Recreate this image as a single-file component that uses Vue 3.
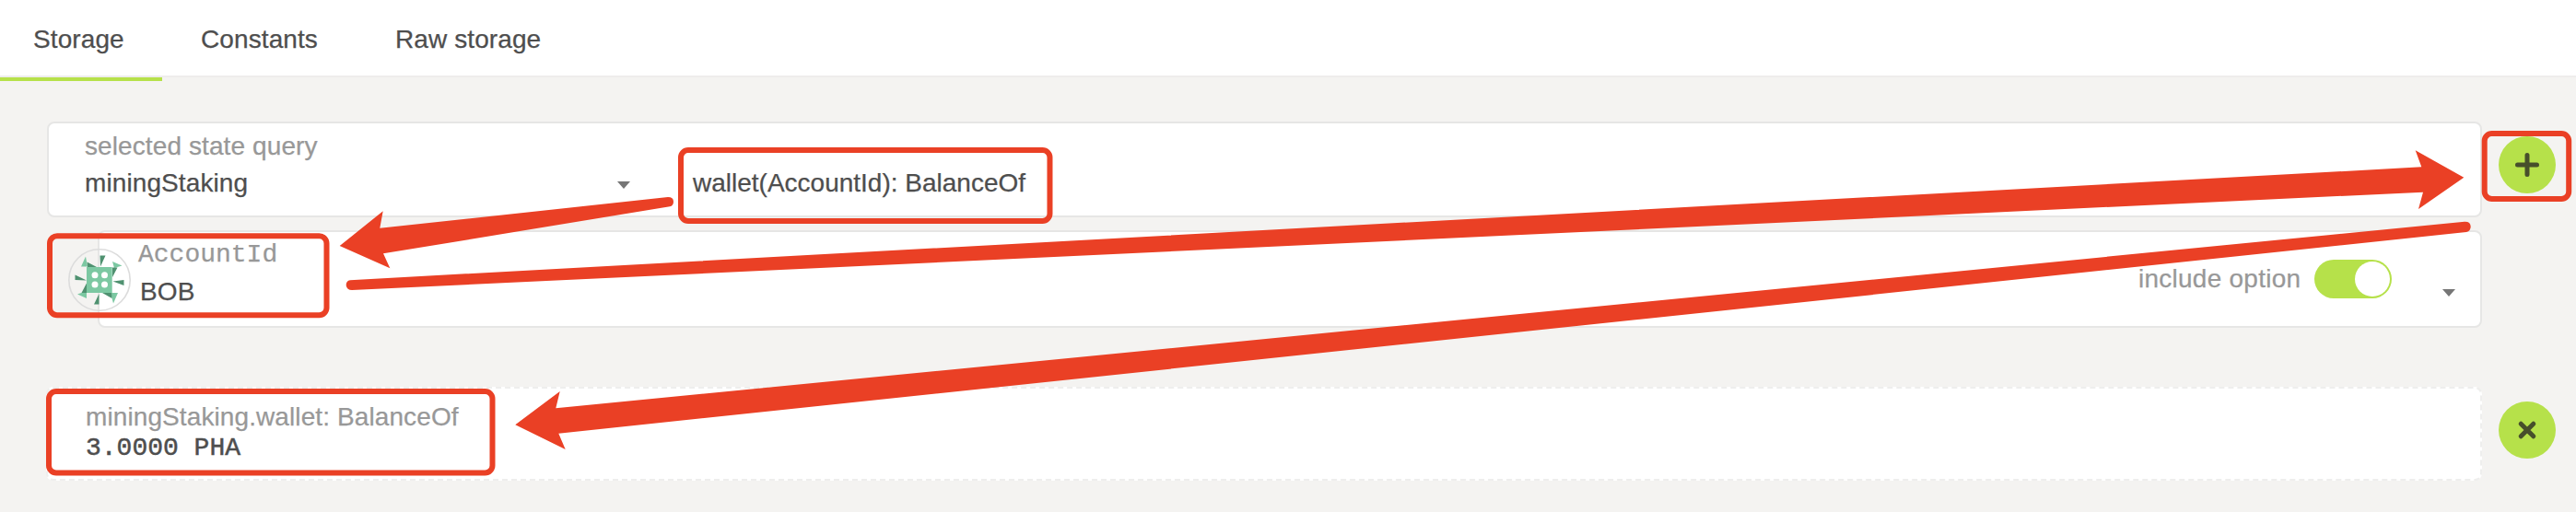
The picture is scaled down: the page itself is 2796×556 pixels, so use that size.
<script setup>
const tabs = [
  { label: 'Storage', active: true },
  { label: 'Constants', active: false },
  { label: 'Raw storage', active: false },
]
</script>

<template>
  <div class="page">
    <nav class="tabs">
      <div v-for="t in tabs" :key="t.label" class="tab" :class="{ active: t.active }">{{ t.label }}</div>
    </nav>

    <main class="content">
      <section class="row">
        <div class="card query">
          <div class="dropdown">
            <div class="label">selected state query</div>
            <div class="value">miningStaking<i class="caret"></i></div>
          </div>
          <div class="method">wallet(AccountId): BalanceOf</div>
        </div>
        <button class="round" aria-label="Add">
          <svg width="26" height="26" viewBox="0 0 26 26"><path d="M13 2.500V23.500M2.500 13H23.500" /></svg>
        </button>
      </section>

      <section class="param">
        <div class="card account">
          <svg class="identicon" width="68" height="68" viewBox="0 0 68 68">
            <circle cx="34" cy="34" r="33.2" fill="none" stroke="#dcdcdc" stroke-width="1.6" />
            <g fill="#7cc8a2">
              <path d="M20 20H47.700V48H20Z" />
              <path d="M19 8.500L14 19.500H21L20 14ZM48 14L58.500 18.500L50 21ZM20 54L10 49.500L20 46ZM49 59.500L54 48H46Z" />
            </g>
            <g fill="#4f9170">
              <path d="M34.500 7.500H40.500L35 19.500ZM60.500 34V40L48.500 35.500ZM33.500 60.500H28L33.500 49ZM7.500 34V28.500L20 34.500Z" />
              <path d="M20.500 14.500L31 20H21ZM53.500 20.500L48 31V20.500ZM47.500 54L37 48H47ZM14.500 48L20 37.500V48Z" />
            </g>
            <g fill="#fff">
              <circle cx="29" cy="28.700" r="3.500" /><circle cx="39.500" cy="28.700" r="3.500" />
              <circle cx="29" cy="39" r="3.500" /><circle cx="39.500" cy="39" r="3.500" />
            </g>
          </svg>
          <div class="who">
            <div class="type">AccountId</div>
            <div class="name">BOB</div>
          </div>
          <div class="option">include option</div>
          <div class="toggle"><span class="knob"></span></div>
          <i class="caret end"></i>
        </div>
      </section>

      <section class="row result-row">
        <div class="card result">
          <div class="label">miningStaking.wallet: BalanceOf</div>
          <div class="amount">3.0000 PHA</div>
        </div>
        <button class="round" aria-label="Remove">
          <svg width="26" height="26" viewBox="0 0 26 26"><path d="M6.200 6.200L19.800 19.800M19.800 6.200L6.200 19.800" /></svg>
        </button>
      </section>
    </main>

    <svg class="notes" width="2796" height="556" viewBox="0 0 2796 556">
      <g fill="none" stroke="#ea4025" stroke-width="6">
        <rect x="739" y="163" width="400.500" height="77" rx="8" />
        <rect x="54" y="256.300" width="300.500" height="86" rx="8" />
        <rect x="2696.700" y="145" width="91.500" height="71" rx="8" />
        <rect x="53" y="425" width="481.500" height="88.500" rx="8" />
      </g>
      <g fill="#ea4025">
        <path d="M368.700 267L415.700 229.300L412.300 247.700L725 214Q731 214 731 219Q731 223.500 727 224.300L416 275.300L423.300 291.300Z" />
        <path d="M2674.300 192.700L2621.700 163.300L2628.300 181.300L380 304.200Q375.500 305 375.700 310Q376.500 315 382 315L2630 208.700L2625 227Z" />
        <path d="M559.300 461.300L607.700 425L603.300 443.300L2675 240.800Q2681.500 240.500 2681.700 246Q2681.700 251 2677 252L606.300 470.700L613.700 488Z" />
      </g>
    </svg>
  </div>
</template>

<style>
body { background: #f4f3f1; }
</style>

<style scoped>
.page {
  position: relative;
  width: 2796px;
  height: 556px;
  overflow: hidden;
  background: #f4f3f1;
  color: #4e4e4e;
  font: 28px/40px "Liberation Sans", Arial, sans-serif;
  letter-spacing: 0.1px;
  -webkit-text-stroke: 0.25px;
}
.page * { box-sizing: border-box; }
.tabs {
  display: flex;
  height: 84px;
  background: #fff;
  border-bottom: 2px solid #eeedec;
}
.tab {
  height: 88px;
  padding: 23px 42px 0 42px;
  letter-spacing: 0.1px;
}
.tab.active {
  width: 176px;
  padding: 23px 0 0 36px;
  border-bottom: 4px solid #b6e14a;
}
.content { padding: 48px 22px 0 51px; }
.row { display: flex; gap: 18px; }
.card {
  background: #fff;
  border: 2px solid #e6e6e5;
  border-radius: 8px;
}
.query {
  display: flex;
  width: 2643px;
  height: 104px;
  padding: 5px 39px;
}
.dropdown { width: 660px; }
.label { color: #989898; }
.value {
  display: flex;
  align-items: center;
  justify-content: space-between;
  width: 592px;
}
.method { padding-top: 40px; letter-spacing: 0; }
.caret {
  width: 0;
  height: 0;
  margin-top: 3px;
  border: 7px solid transparent;
  border-top: 8px solid #767676;
  border-bottom: 0;
}
.round {
  display: flex;
  align-items: center;
  justify-content: center;
  width: 62px;
  height: 62px;
  margin-top: 16px;
  padding: 0;
  border: 0;
  border-radius: 50%;
  background: #b6e14a;
}
.round path { fill: none; stroke: #474f2b; stroke-width: 5; stroke-linejoin: round; stroke-linecap: round; }
.param { padding: 14px 0 0 55px; }
.account {
  display: flex;
  width: 2588px;
  height: 106px;
}
.identicon { flex: none; margin: 18px 0 0 -34px; }
.who { width: 2179px; padding: 9px 0 0 8px; }
.type {
  height: 36px;
  color: #989898;
  font-family: "Liberation Mono", "Courier New", monospace;
  line-height: 32px;
  letter-spacing: 0;
}
.name { padding-left: 2px; }
.option { width: 191px; padding-top: 31px; color: #989898; letter-spacing: 0.25px; white-space: nowrap; }
.toggle {
  display: flex;
  justify-content: flex-end;
  width: 84px;
  height: 42px;
  margin-top: 30px;
  padding: 2px;
  border-radius: 21px;
  background: #b6e14a;
}
.knob { width: 38px; height: 38px; border-radius: 50%; background: #fff; }
.caret.end { margin: 62px 0 0 55px; }
.result-row { padding-top: 64px; }
.result {
  width: 2644px;
  height: 102px;
  margin-left: -1px;
  padding: 11px 41px;
  border: 2px dashed #eeeeed;
}
.result .label { height: 38px; }
.amount {
  font-family: "Liberation Mono", "Courier New", monospace;
  line-height: 32px;
  letter-spacing: 0;
  -webkit-text-stroke: 0.5px;
}
.notes { position: absolute; inset: 0; }
</style>
